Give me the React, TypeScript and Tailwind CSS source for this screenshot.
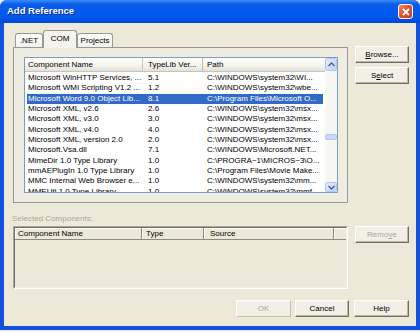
import React from 'react';

type Row = { name: string; ver: string; path: string; selected?: boolean };

const ROWS: Row[] = [
  { name: 'Microsoft WinHTTP Services, ...', ver: '5.1', path: 'C:\\WINDOWS\\system32\\WI...' },
  { name: 'Microsoft WMI Scripting V1.2 ...', ver: '1.2', path: 'C:\\WINDOWS\\system32\\wbe...' },
  { name: 'Microsoft Word 9.0 Object Lib...', ver: '8.1', path: 'C:\\Program Files\\Microsoft O...', selected: true },
  { name: 'Microsoft XML, v2.6', ver: '2.6', path: 'C:\\WINDOWS\\system32\\msx...' },
  { name: 'Microsoft XML, v3.0', ver: '3.0', path: 'C:\\WINDOWS\\system32\\msx...' },
  { name: 'Microsoft XML, v4.0', ver: '4.0', path: 'C:\\WINDOWS\\system32\\msx...' },
  { name: 'Microsoft XML, version 2.0', ver: '2.0', path: 'C:\\WINDOWS\\system32\\msx...' },
  { name: 'Microsoft.Vsa.dll', ver: '7.1', path: 'C:\\WINDOWS\\Microsoft.NET...' },
  { name: 'MimeDir 1.0 Type Library', ver: '1.0', path: 'C:\\PROGRA~1\\MICROS~3\\O...' },
  { name: 'mmAEPlugIn 1.0 Type Library', ver: '1.0', path: 'C:\\Program Files\\Movie Make...' },
  { name: 'MMC Internal Web Browser e...', ver: '1.0', path: 'C:\\WINDOWS\\system32\\mm...' },
  { name: 'MMEUtl 1.0 Type Library', ver: '1.0', path: 'C:\\WINDOWS\\system32\\mmf...' },
];

const btn =
  'h-[17px] flex items-center justify-center border border-t-white border-l-white border-r-[#716f64] border-b-[#716f64] bg-[#f1efe6] shadow-[inset_-1px_-1px_0_#b9b6a8]';

function Chevron({ up }: { up?: boolean }) {
  return (
    <svg width="7" height="5" viewBox="0 0 7 5">
      <path
        d={up ? 'M0.5 4 L3.5 1 L6.5 4' : 'M0.5 1 L3.5 4 L6.5 1'}
        fill="none"
        stroke="#4d6185"
        strokeWidth="1.4"
      />
    </svg>
  );
}

export default function App() {
  return (
    <div className="w-[420px] h-[332px] bg-[#eeeeee] font-['Liberation_Sans',Arial,sans-serif] text-black text-[8px]">
      <div className="w-[420px] h-[330px] flex flex-col rounded-t-[7px] overflow-hidden bg-[#1250e0]">
        {/* Title bar */}
        <div className="h-[23px] flex items-center justify-between pl-[7px] pr-[7px] bg-[linear-gradient(to_bottom,#3d8ef8,#0a5ceb_18%,#0058ee_70%,#0048d8)]">
          <span className="text-white font-bold text-[9.5px] [text-shadow:1px_1px_0_#0a2a8a]">Add Reference</span>
          <div className="w-[15px] h-[15px] rounded-[3px] border border-white bg-[linear-gradient(135deg,#f08a6a,#e0502a_50%,#c83a1a)] flex items-center justify-center">
            <svg width="8" height="8" viewBox="0 0 8 8">
              <path d="M1 1 L7 7 M7 1 L1 7" stroke="white" strokeWidth="1.8" />
            </svg>
          </div>
        </div>

        {/* Client area */}
        <div className="flex-1 mx-[4px] mb-[4px] bg-[#ece9d8] flex flex-col pt-[7px]">
          <div className="flex">
            <div className="ml-[9px] w-[335px] flex flex-col">
              {/* Tabs */}
              <div className="h-[17px] flex items-end pl-[2px]">
                <div className="w-[28px] h-[14px] border border-b-0 border-[#919b9c] rounded-t-[3px] bg-[linear-gradient(#ffffff,#f1f0ea)] flex items-center justify-center">
                  .NET
                </div>
                <div className="relative z-10 -mb-px w-[34px] h-[18px] border border-b-0 border-[#919b9c] rounded-t-[3px] bg-[#f4f3ee] flex items-center justify-center pb-[2px]">
                  COM
                </div>
                <div className="w-[36px] h-[14px] border border-b-0 border-[#919b9c] rounded-t-[3px] bg-[linear-gradient(#ffffff,#f1f0ea)] flex items-center justify-center">
                  Projects
                </div>
              </div>

              {/* Tab panel */}
              <div className="h-[156px] border border-[#919b9c] bg-[#efede2] pt-[9px] pl-[10px] pr-[9px]">
                <div className="h-[136px] border border-[#7f9db9] bg-white flex overflow-hidden">
                  <div className="flex-1 min-w-0 flex flex-col overflow-hidden">
                    <div className="h-[14px] shrink-0 flex bg-[linear-gradient(#ffffff,#f5f4ef_55%,#e4e2d6)] border-b border-[#c9c5b6] leading-[13px]">
                      <div className="w-[118px] pl-[3px] border-r border-[#c9c5b6]">Component Name</div>
                      <div className="w-[60px] pl-[5px] border-r border-[#c9c5b6] whitespace-nowrap overflow-hidden">TypeLib Ver...</div>
                      <div className="flex-1 pl-[4px]">Path</div>
                    </div>
                    <div className="pt-[1px]">
                      {ROWS.map((r) => (
                        <div key={r.name} className="h-[10.35px] flex pl-[2px] pr-[2px] leading-[10.35px]">
                          <div className={`flex-1 flex min-w-0 ${r.selected ? 'bg-[#316ac5] text-white' : ''}`}>
                            <div className="w-[116px] pl-[1px] whitespace-nowrap overflow-hidden">{r.name}</div>
                            <div className="w-[60px] pl-[5px]">{r.ver}</div>
                            <div className="flex-1 min-w-0 pl-[4px] whitespace-nowrap overflow-hidden">{r.path}</div>
                          </div>
                        </div>
                      ))}
                    </div>
                  </div>
                  {/* Scrollbar */}
                  <div className="w-[12px] shrink-0 flex flex-col bg-[#f7f7f3]">
                    <div className="h-[13px] rounded-[2px] border border-[#b4c6f0] bg-[linear-gradient(135deg,#e2ebfd,#c1d3fb)] flex items-center justify-center">
                      <Chevron up />
                    </div>
                    <div className="flex-1">
                      <div className="mt-[63px] h-[6px] rounded-[2px] border border-[#b4c6f0] bg-[#c8d7fb]" />
                    </div>
                    <div className="h-[10px] rounded-[2px] border border-[#b4c6f0] bg-[linear-gradient(135deg,#e2ebfd,#c1d3fb)] flex items-center justify-center">
                      <Chevron />
                    </div>
                  </div>
                </div>
              </div>
            </div>

            {/* Right buttons */}
            <div className="ml-[7px] w-[54px] mt-[16px] flex flex-col gap-[4px]">
              <div className={btn}>
                <span><span className="underline">B</span>rowse...</span>
              </div>
              <div className={btn}>
                <span>S<span className="underline">e</span>lect</span>
              </div>
            </div>
          </div>

          <div className="ml-[8px] mt-[10px] h-[11px] leading-[11px] text-[#aca899]">Selected Components:</div>

          <div className="mt-[2px] flex">
            <div className="ml-[9px] w-[335px] h-[63px] border border-t-[#aca899] border-l-[#aca899] border-r-white border-b-white">
              <div className="h-full border border-t-[#716f64] border-l-[#716f64] border-r-[#f1efe2] border-b-[#f1efe2] flex flex-col">
                <div className="h-[12px] flex leading-[11px]">
                  <div className="w-[127px] pl-[3px] border-r border-b border-[#8e8b7e] shadow-[inset_1px_1px_0_#fff]">Component Name</div>
                  <div className="w-[62px] pl-[4px] border-r border-b border-[#8e8b7e] shadow-[inset_1px_1px_0_#fff]">Type</div>
                  <div className="w-[130px] pl-[6px] border-r border-b border-[#8e8b7e] shadow-[inset_1px_1px_0_#fff]">Source</div>
                  <div className="flex-1 border-b border-[#8e8b7e] shadow-[inset_1px_1px_0_#fff]" />
                </div>
              </div>
            </div>
            <div className={`ml-[7px] w-[54px] ${btn} h-[16px] text-[#aca899]`}>
              <span>Remo<span className="underline">v</span>e</span>
            </div>
          </div>

          <div className="mt-[11px] flex justify-end pr-[7px]">
            <div className={`w-[55px] ${btn} text-[#aca899] border-r-[#c4c1b3] border-b-[#c4c1b3] shadow-none`}>OK</div>
            <div className={`ml-[4px] w-[54px] ${btn}`}>Cancel</div>
            <div className={`ml-[5px] w-[55px] ${btn}`}>Help</div>
          </div>
        </div>
      </div>
    </div>
  );
}
